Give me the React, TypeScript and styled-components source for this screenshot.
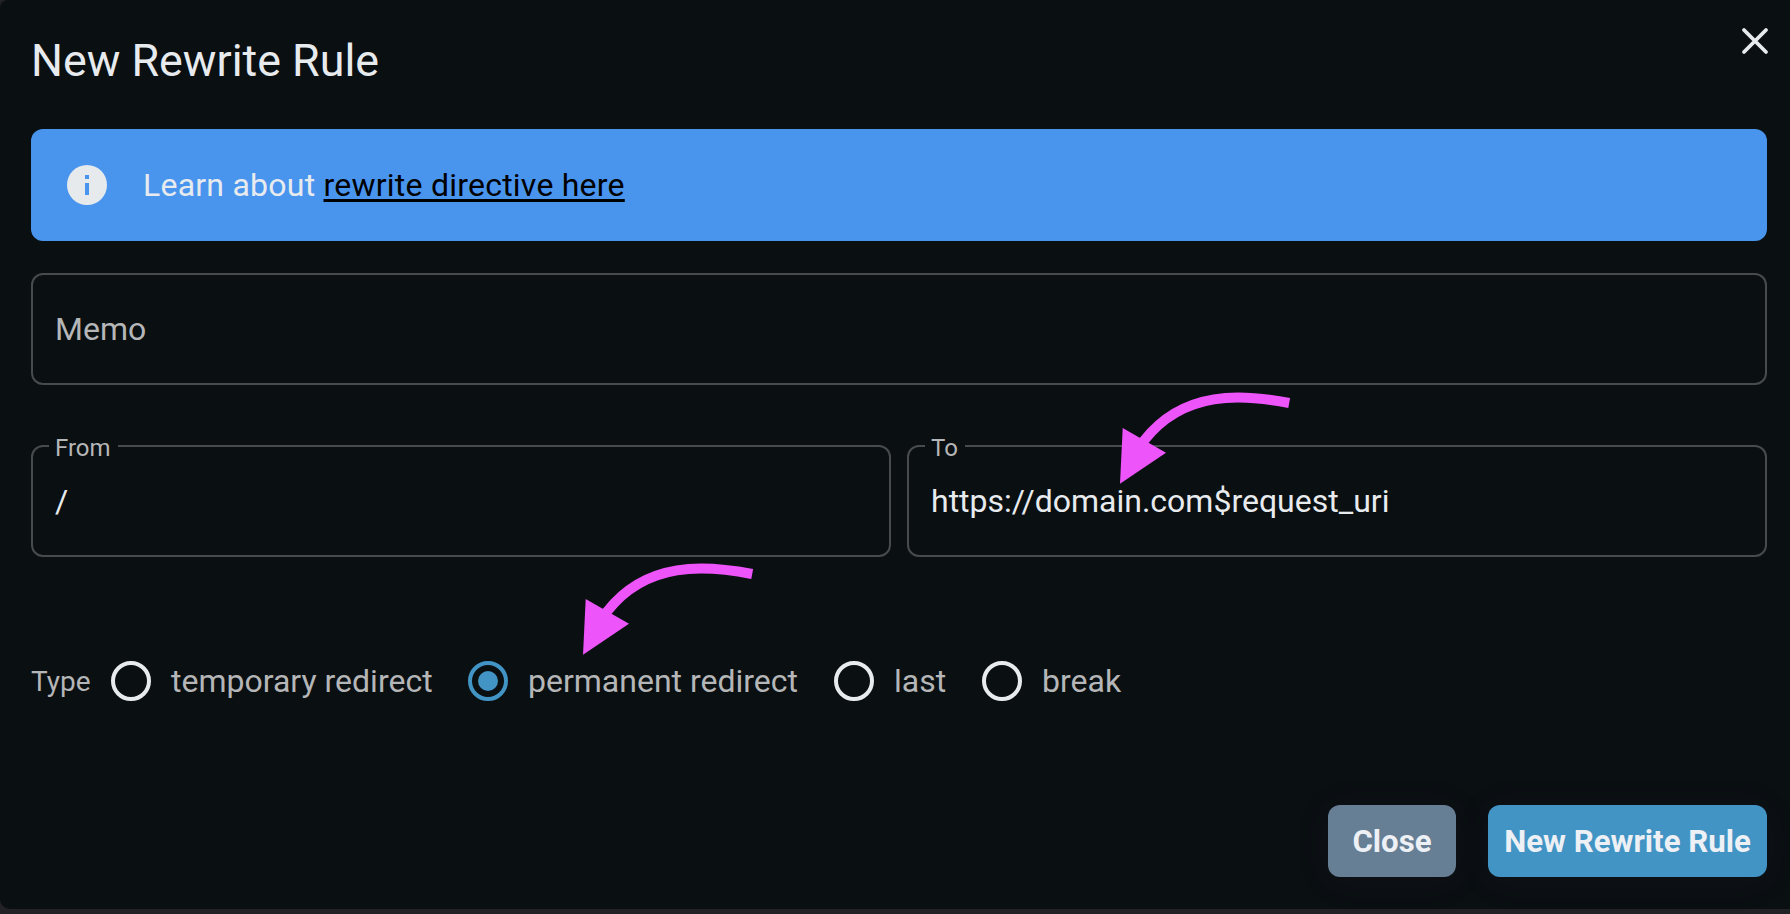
import React from "react";
import styled, { createGlobalStyle } from "styled-components";

const colors = {
  surface: "#0a0f12",
  backdrop: "#222125",
  text: "#e8ebee",
  muted: "#b5b6b7",
  outline: "#474b4d",
  info: "#4995ee",
  primary: "#4294c4",
  secondary: "#667f94",
  arrow: "#ed54fa",
};

const GlobalStyle = createGlobalStyle`
  *, *::before, *::after { box-sizing: border-box; }
  body {
    margin: 0;
    background: ${colors.backdrop};
    color: ${colors.text};
    font-family: Roboto, "Liberation Sans", sans-serif;
    font-size: 32px;
    overflow: hidden;
  }
`;

const Page = styled.div`
  height: 914px;
  background: ${colors.backdrop};
`;

const Dialog = styled.section`
  position: relative;
  display: flex;
  flex-direction: column;
  height: 909px;
  padding: 29px 23px 32px 31px;
  background: ${colors.surface};
  border-radius: 8px 0 0 10px;
`;

const Header = styled.header`
  display: flex;
  justify-content: space-between;
  align-items: flex-start;
  height: 100px;
`;

const Title = styled.h1`
  margin: 0;
  font-size: 44.8px;
  line-height: 64px;
  font-weight: 400;
`;

const CloseIconButton = styled.button`
  display: flex;
  margin: -2px -2px 0 0;
  padding: 0;
  border: 0;
  background: none;
  color: ${colors.text};
`;

const Alert = styled.div`
  display: flex;
  align-items: center;
  gap: 36px;
  height: 112px;
  padding-left: 36px;
  border-radius: 12px;
  background: ${colors.info};
  letter-spacing: 0.23px;
`;

const AlertLink = styled.a`
  color: #000;
  text-decoration: underline;
  text-decoration-thickness: 3px;
  text-underline-offset: 3px;
`;

const Field = styled.div`
  position: relative;
  display: flex;
  align-items: center;
  flex: 1;
  height: 112px;
  padding-left: 22px;
  border: 2px solid ${colors.outline};
  border-radius: 12px;
`;

const Placeholder = styled.span`
  color: ${colors.muted};
`;

const FloatingLabel = styled.label`
  position: absolute;
  top: -15px;
  left: 16px;
  padding: 0 7px 0 6px;
  background: ${colors.surface};
  color: ${colors.muted};
  font-size: 24px;
  line-height: 32px;
`;

const FieldRow = styled.div<{ $top: number }>`
  display: flex;
  gap: 16px;
  margin-top: ${(p) => p.$top}px;
`;

const RadioRow = styled.div`
  display: flex;
  align-items: center;
  height: 48px;
  margin-top: 100px;
  color: ${colors.muted};
`;

const GroupLabel = styled.span`
  width: 80px;
  font-size: 28px;
`;

const RadioOption = styled.label<{ $width: number }>`
  display: flex;
  align-items: center;
  gap: 20px;
  width: ${(p) => p.$width}px;
  white-space: nowrap;
`;

const RadioCircle = styled.span<{ $checked: boolean }>`
  display: grid;
  place-items: center;
  flex: none;
  width: 40px;
  height: 40px;
  border: 4px solid ${(p) => (p.$checked ? colors.primary : colors.text)};
  border-radius: 50%;

  &::after {
    content: "";
    width: 20px;
    height: 20px;
    border-radius: 50%;
    background: ${(p) => (p.$checked ? colors.primary : "transparent")};
  }
`;

const Actions = styled.footer`
  display: flex;
  justify-content: flex-end;
  gap: 32px;
  margin-top: auto;
`;

const ActionButton = styled.button<{ $color: string; $width: number }>`
  width: ${(p) => p.$width}px;
  height: 72px;
  padding: 0;
  border: 0;
  border-radius: 12px;
  background: ${(p) => p.$color};
  box-shadow: 0 4px 36px rgba(90, 70, 90, 0.09);
  color: #edf0f4;
  font: inherit;
  font-size: 31.2px;
  font-weight: 700;
  white-space: nowrap;
`;

const ArrowMark = styled.svg<{ $x: number; $y: number }>`
  position: absolute;
  left: ${(p) => p.$x}px;
  top: ${(p) => p.$y}px;
  overflow: visible;
  pointer-events: none;
`;

function Arrow({ x, y }: { x: number; y: number }) {
  return (
    <ArrowMark $x={x} $y={y} width="172" height="95" viewBox="0 0 172 95">
      <path
        d="M169.2 14 C122 5 64 1 24.5 51 L18 60"
        fill="none"
        stroke={colors.arrow}
        strokeWidth="10"
      />
      <path d="M2.7 39 L46 63.7 L0 94.8 Z" fill={colors.arrow} />
    </ArrowMark>
  );
}

const options = [
  { label: "temporary redirect", width: 357 },
  { label: "permanent redirect", checked: true, width: 366 },
  { label: "last", width: 148 },
  { label: "break", width: 150 },
];

export default function App() {
  return (
    <Page>
      <GlobalStyle />
      <Dialog role="dialog" aria-label="New Rewrite Rule">
        <Header>
          <Title>New Rewrite Rule</Title>
          <CloseIconButton aria-label="Close dialog">
            <svg width="28" height="28" viewBox="0 0 28 28">
              <path
                d="M3 3 L25 25 M25 3 L3 25"
                stroke="currentColor"
                strokeWidth="3.8"
                strokeLinecap="round"
              />
            </svg>
          </CloseIconButton>
        </Header>
        <Alert>
          <svg width="40" height="40" viewBox="2 2 20 20">
            <path
              fill="#e6eaec"
              d="M13 9h-2V7h2m0 10h-2v-6h2m-1-9A10 10 0 0 0 2 12a10 10 0 0 0 10 10 10 10 0 0 0 10-10A10 10 0 0 0 12 2Z"
            />
          </svg>
          <span>
            Learn about <AlertLink>rewrite directive here</AlertLink>
          </span>
        </Alert>
        <FieldRow $top={32}>
          <Field>
            <Placeholder>Memo</Placeholder>
          </Field>
        </FieldRow>
        <FieldRow $top={60}>
          <Field>
            <FloatingLabel>From</FloatingLabel>/
          </Field>
          <Field>
            <FloatingLabel>To</FloatingLabel>https://domain.com$request_uri
          </Field>
        </FieldRow>
        <RadioRow role="radiogroup">
          <GroupLabel>Type</GroupLabel>
          {options.map((o) => (
            <RadioOption key={o.label} $width={o.width}>
              <RadioCircle $checked={!!o.checked} />
              {o.label}
            </RadioOption>
          ))}
        </RadioRow>
        <Actions>
          <ActionButton $color={colors.secondary} $width={128}>
            Close
          </ActionButton>
          <ActionButton $color={colors.primary} $width={279}>
            New Rewrite Rule
          </ActionButton>
        </Actions>
        <Arrow x={1120} y={389} />
        <Arrow x={583} y={560} />
      </Dialog>
    </Page>
  );
}
